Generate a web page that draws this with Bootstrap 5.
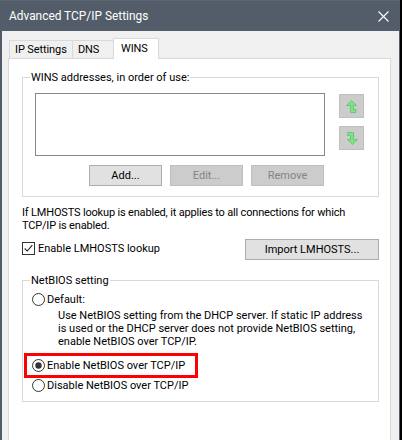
<!DOCTYPE html>
<html lang="en"><head><meta charset="utf-8">
<link href="https://cdn.jsdelivr.net/npm/bootstrap@5.3.0/dist/css/bootstrap.min.css" rel="stylesheet">
<style>
html,body{height:100%;}
body{margin:0;background:#fff;font-family:Roboto,"Noto Sans","Liberation Sans",sans-serif;font-size:11px;line-height:13px;color:#000;overflow:hidden;white-space:nowrap;}
.win-shell{width:402px;height:440px;display:flex;flex-direction:column;background:#fff;border-right:2px solid #000;}
.win-title{height:31px;background:#535d69;color:#fff;font-size:11.9px;padding:0 11px 0 9px;flex:none;border-top:1px solid #5c6672;}
.win-body{flex:1;display:flex;flex-direction:column;background:#f0f0f0;border-left:2px solid #535d69;border-right:1px solid #535d69;padding:7px 8px 0 6px;min-height:0;}
.tab-row{display:flex;height:20px;padding-left:1px;align-items:flex-end;position:relative;z-index:1;flex:none;}
.tab-item{height:18px;border:1px solid #d9d9d9;border-bottom:0;background:#f0f0f0;padding:2px 0 0 5px;margin-right:-1px;letter-spacing:-.1px;}
.tab-item.tab-on{height:21px;background:#fff;padding:3px 0 0 7px;margin-bottom:-1px;}
.tab-page{flex:1;background:#fff;border:1px solid #d9d9d9;border-bottom:0;padding:18px 11px 0 13px;min-height:0;}
.grp{border:1px solid #d9d9d9;position:relative;}
.grp-label{position:absolute;left:7px;top:-7px;background:#fff;padding:0 1px;}
.grp-wins{height:120px;padding:15px 0 0 12px;}
.addr-box{width:290px;height:63px;border:1px solid #828790;background:#fff;flex:none;}
.ud-col{margin-left:14px;margin-top:1px;gap:8px;}
.ud-btn{width:25px;height:24px;background:#ccc;border:1px solid #bfbfbf;display:flex;align-items:center;justify-content:center;}
.btn-row{margin-top:9px;margin-left:54px;gap:8px;}
.win-btn{height:21px;width:73px;background:#e1e1e1;border:1px solid #adadad;display:flex;align-items:center;justify-content:center;color:#000;flex:none;}
.win-btn.is-off{background:#ccc;border-color:#bfbfbf;color:#838383;}
.win-btn.is-wide{width:134px;}
.chk{width:13px;height:13px;border:1px solid #333;flex:none;display:block;}
.rad{width:13px;height:13px;flex:none;display:block;}
.info-text{margin-top:9px;letter-spacing:-.17px;}
.lm-row{margin-top:7px;}
.lm-check{gap:3px;padding-bottom:2px;}
.grp-net{height:122px;padding:12px 0 0 9px;margin-top:20px;}
.rad-row{gap:2px;}
.help-text{margin-left:26px;margin-top:3px;}
.hl-box{width:174px;height:25px;border:3px solid #f00;margin:5px 0 0 -8px;padding:0 0 1px 5px;}
.rad-last{margin-top:1px;}
</style></head><body>
<div class="win-shell">
 <div class="win-title d-flex align-items-center justify-content-between">
  <span>Advanced TCP/IP Settings</span>
  <svg width="11" height="11" viewBox="0 0 11 11"><path d="M.5.5l10 10M10.5.5l-10 10" stroke="#fff" stroke-width="1.1" fill="none"/></svg>
 </div>
 <div class="win-body">
  <div class="tab-row">
   <div class="tab-item" style="width:64px">IP Settings</div>
   <div class="tab-item" style="width:42px">DNS</div>
   <div class="tab-item tab-on" style="width:46px">WINS</div>
  </div>
  <div class="tab-page">
   <div class="grp grp-wins">
    <span class="grp-label">WINS addresses, in order of use:</span>
    <div class="d-flex">
     <div class="addr-box"></div>
     <div class="ud-col d-flex flex-column">
      <div class="ud-btn"><svg width="11" height="13" viewBox="-.5 -.5 11 13"><path d="M5 0L10 5H7V9H9.5V12H4V5H0Z" fill="#7be585" stroke="#56c060" stroke-width=".7"/></svg></div>
      <div class="ud-btn"><svg width="12" height="13" viewBox="-.5 -.5 12 13"><path d="M6 12L1 7H4V3H1V0H7V7H11Z" fill="#7be585" stroke="#56c060" stroke-width=".7"/></svg></div>
     </div>
    </div>
    <div class="btn-row d-flex">
     <div class="win-btn">Add...</div>
     <div class="win-btn is-off">Edit...</div>
     <div class="win-btn is-off">Remove</div>
    </div>
   </div>
   <div class="info-text">If LMHOSTS lookup is enabled, it applies to all connections for which<br>TCP/IP is enabled.</div>
   <div class="lm-row d-flex align-items-center justify-content-between">
    <div class="lm-check d-flex align-items-center">
     <svg class="chk" viewBox="0 0 13 13"><path d="M2 6.5l3 3 6-7" stroke="#222" stroke-width="1.3" fill="none"/></svg>
     <span>Enable LMHOSTS lookup</span>
    </div>
    <div class="win-btn is-wide">Import LMHOSTS...</div>
   </div>
   <div class="grp grp-net">
    <span class="grp-label">NetBIOS setting</span>
    <div class="rad-row d-flex align-items-center">
     <svg class="rad" viewBox="0 0 13 13"><circle cx="6.5" cy="6.5" r="6" fill="#fff" stroke="#333"/></svg>
     <span>Default:</span>
    </div>
    <div class="help-text">Use NetBIOS setting from the DHCP server. If static IP address<br>is used or the DHCP server does not provide NetBIOS setting,<br>enable NetBIOS over TCP/IP.</div>
    <div class="hl-box rad-row d-flex align-items-center">
     <svg class="rad" viewBox="0 0 13 13"><circle cx="6.5" cy="6.5" r="6" fill="#fff" stroke="#333"/><circle cx="6.5" cy="6.5" r="3.2" fill="#333"/></svg>
     <span>Enable NetBIOS over TCP/IP</span>
    </div>
    <div class="rad-last rad-row d-flex align-items-center">
     <svg class="rad" viewBox="0 0 13 13"><circle cx="6.5" cy="6.5" r="6" fill="#fff" stroke="#333"/></svg>
     <span>Disable NetBIOS over TCP/IP</span>
    </div>
   </div>
  </div>
 </div>
</div>
<script src="https://cdn.jsdelivr.net/npm/bootstrap@5.3.0/dist/js/bootstrap.bundle.min.js"></script>
</body></html>
